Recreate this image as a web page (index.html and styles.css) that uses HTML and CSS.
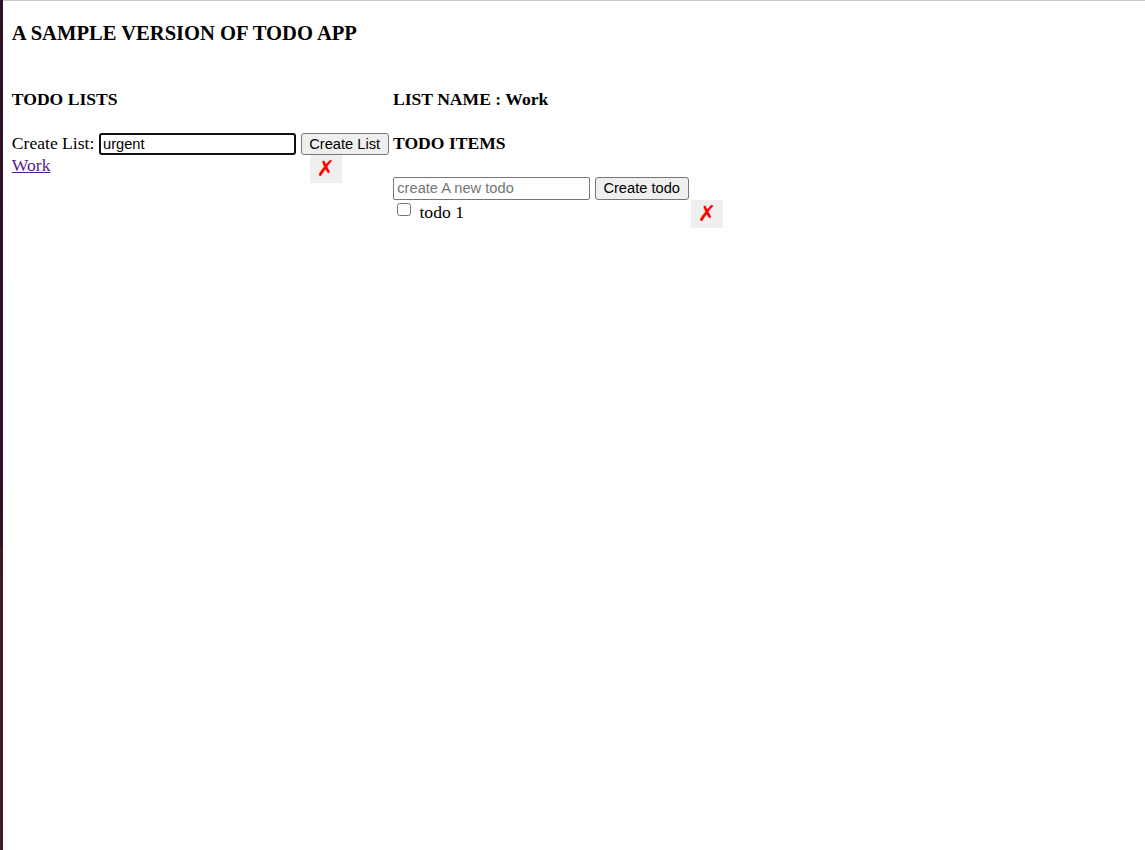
FILE: index.html
```html
<!DOCTYPE html>
<html lang="en">
<head>
<meta charset="utf-8">
<title>Todo App</title>
<link rel="stylesheet" href="styles.css">
</head>
<body>
<div class="edge"></div>
<main class="page">
  <h3 class="title">A SAMPLE VERSION OF TODO APP</h3>
  <div class="columns">
    <section class="lists">
      <h4 class="heading">TODO LISTS</h4>
      <form class="form">
        <label class="label" for="list">Create List:</label>
        <input class="field focused" id="list" type="text" value="urgent">
        <button class="create create-list" type="button">Create List</button>
      </form>
      <div class="row">
        <a class="link" href="#">Work</a>
        <button class="remove" type="button">✗</button>
      </div>
    </section>
    <section class="items">
      <h4 class="heading">LIST NAME : Work</h4>
      <h4 class="heading">TODO ITEMS</h4>
      <form class="form">
        <input class="field" type="text" placeholder="create A new todo">
        <button class="create create-todo" type="button">Create todo</button>
      </form>
      <div class="row todo">
        <input class="check" id="todo1" type="checkbox">
        <label class="todo-name" for="todo1">todo 1</label>
        <button class="remove" type="button">✗</button>
      </div>
    </section>
  </div>
</main>
</body>
</html>
```
FILE: styles.css
```css
* { box-sizing: border-box; }
body {
  margin: 0;
  height: 850px;
  display: flex;
  overflow: hidden;
  background: #fff;
  color: #000;
  font: 17.6px/20px "Liberation Serif", "Times New Roman", serif;
}
.edge {
  width: 3px;
  background: linear-gradient(#2d0f29 0, #351128 545px, #451820 552px, #451b1f 100%);
}
.page {
  flex: 1;
  border-top: 1px solid #c8c8c8;
  padding: 20px 0 0 8.8px;
}
.title { margin: 0 0 44px; font-size: 20.592px; line-height: 24px; }
.columns { display: flex; }
.lists { width: 381.2px; }
.items { width: 330px; }
.heading { margin: 0 0 24px; font-size: 17.6px; line-height: 20px; }
.form { display: flex; height: 23px; margin: 0; }
.lists .form { height: 22px; }
.label { width: 87.2px; line-height: 20px; }
.field {
  width: 197px;
  height: 23px;
  margin: 0 5px 0 0;
  padding: 0 3px 2px 3.3px;
  border: 1px solid #767676;
  border-radius: 2px;
  outline: none;
  background: #fff;
  color: #000;
  font: 14.667px/17px "Liberation Sans", Arial, sans-serif;
}
.field::placeholder { color: #757575; }
.lists .field, .lists .create { height: 22px; }
.lists .focused { border: 2px solid #101010; border-radius: 3px; padding: 0 2px; }
.create {
  height: 23px;
  padding: 0 0.6px 0 0;
  border: 1px solid #767676;
  border-radius: 3px;
  background: #efefef;
  color: #000;
  font: 14.667px/17px "Liberation Sans", Arial, sans-serif;
}
.create-list { width: 88px; }
.create-todo { width: 94px; }
.row { display: flex; align-items: flex-start; width: 330px; }
.link { color: #551a8b; line-height: 20px; text-decoration: underline; }
.remove {
  width: 32px;
  height: 28px;
  margin-left: auto;
  padding: 0;
  border: 0;
  background: #efefef;
  color: #f00;
  font: 22px/26px "DejaVu Sans", sans-serif;
}
.check {
  appearance: none;
  width: 13.5px;
  height: 13.5px;
  margin: 2.8px 8.6px 0 4.4px;
  border: 1px solid #767676;
  border-radius: 2.75px;
  background: #fff;
}
.check:checked { background: #0075ff; }
.todo-name { line-height: 24px; }
```
